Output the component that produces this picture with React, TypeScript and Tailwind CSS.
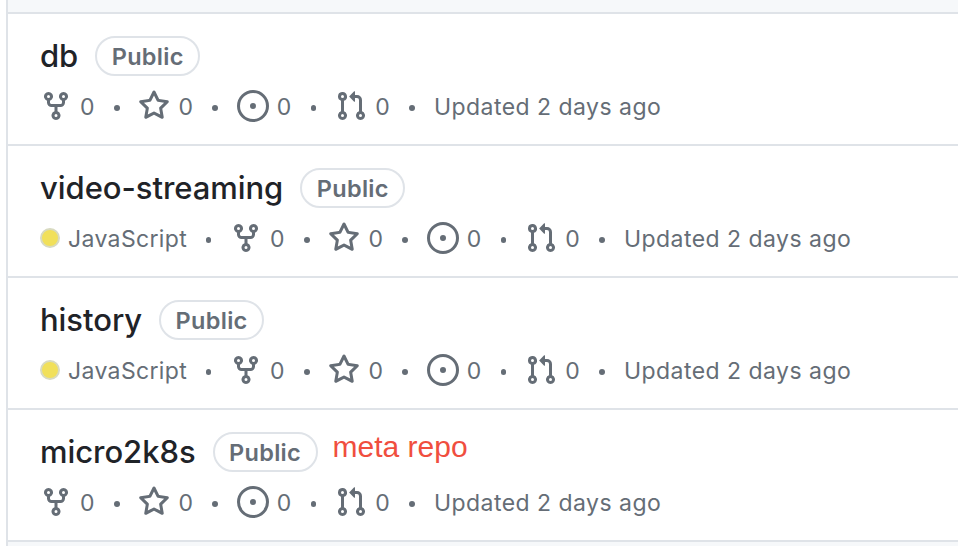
import React from 'react';

interface Repo {
    name: string;
    language?: string;
    note?: string;
}

const repos: Repo[] = [
    { name: 'db' },
    { name: 'video-streaming', language: 'JavaScript' },
    { name: 'history', language: 'JavaScript' },
    { name: 'micro2k8s', note: 'meta repo' },
];

const stats = [
    {
        id: 'forks',
        path: 'M5 5.372v.878c0 .414.336.75.75.75h4.5a.75.75 0 0 0 .75-.75v-.878a2.25 2.25 0 1 1 1.5 0v.878a2.25 2.25 0 0 1-2.25 2.25h-1.5v2.128a2.251 2.251 0 1 1-1.5 0V8.5h-1.5A2.25 2.25 0 0 1 3.5 6.25v-.878a2.25 2.25 0 1 1 1.5 0ZM5 3.25a.75.75 0 1 0-1.5 0 .75.75 0 0 0 1.5 0Zm6.75.75a.75.75 0 1 0 0-1.5.75.75 0 0 0 0 1.5Zm-3 8.75a.75.75 0 1 0-1.5 0 .75.75 0 0 0 1.5 0Z',
    },
    {
        id: 'stars',
        path: 'M8 .25a.75.75 0 0 1 .673.418l1.882 3.815 4.21.612a.75.75 0 0 1 .416 1.279l-3.046 2.97.719 4.192a.751.751 0 0 1-1.088.791L8 12.347l-3.766 1.98a.75.75 0 0 1-1.088-.79l.72-4.194L.818 6.374a.75.75 0 0 1 .416-1.28l4.21-.611L7.327.668A.75.75 0 0 1 8 .25Zm0 2.445L6.615 5.5a.75.75 0 0 1-.564.41l-3.097.45 2.24 2.184a.75.75 0 0 1 .216.664l-.528 3.084 2.769-1.456a.75.75 0 0 1 .698 0l2.77 1.456-.53-3.084a.75.75 0 0 1 .216-.664l2.24-2.183-3.096-.45a.75.75 0 0 1-.564-.41L8 2.694Z',
    },
    {
        id: 'issues',
        path: 'M8 9.5a1.5 1.5 0 1 0 0-3 1.5 1.5 0 0 0 0 3ZM8 0a8 8 0 1 1 0 16A8 8 0 0 1 8 0ZM1.5 8a6.5 6.5 0 1 0 13 0 6.5 6.5 0 0 0-13 0Z',
    },
    {
        id: 'pulls',
        path: 'M1.5 3.25a2.25 2.25 0 1 1 3 2.122v5.256a2.251 2.251 0 1 1-1.5 0V5.372A2.25 2.25 0 0 1 1.5 3.25Zm5.677-.177L9.573.677A.25.25 0 0 1 10 .854V2.5h1A2.5 2.5 0 0 1 13.5 5v5.628a2.251 2.251 0 1 1-1.5 0V5a1 1 0 0 0-1-1h-1v1.646a.25.25 0 0 1-.427.177L7.177 3.427a.25.25 0 0 1 0-.354ZM3.75 2.5a.75.75 0 1 0 0 1.5.75.75 0 0 0 0-1.5Zm0 9.5a.75.75 0 1 0 0 1.5.75.75 0 0 0 0-1.5Zm8.25.75a.75.75 0 1 0 1.5 0 .75.75 0 0 0-1.5 0Z',
    },
];

const Dot = () => <span className="mt-1 h-[5.5px] w-[5.5px] shrink-0 rounded-full bg-[#656d76]" />;

const RepoRow: React.FC<{ repo: Repo }> = ({ repo }) => (
    <li className="h-[132px] border-b-2 border-[#dfe3e8] bg-white pt-[22px] pl-8">
        <div className="flex h-10 items-center">
            <h3 className="text-[31px] leading-10 font-medium tracking-[-0.05px] text-[#1f2328]">{repo.name}</h3>
            <span className="ml-[17px] flex h-10 w-[105px] items-center justify-center rounded-full border-2 border-[#dfe3e8] pt-0.5 text-[23.5px] font-semibold tracking-[0.3px] text-[#656d76]">
                Public
            </span>
            {repo.note && (
                <span className="mb-2.5 ml-[15px] font-['Liberation_Sans'] text-[30px] leading-8 text-[#f04e3e]">
                    {repo.note}
                </span>
            )}
        </div>

        <div className="mt-[14px] flex h-8 items-center text-[23px] tracking-[0.46px] text-[#656d76]">
            {repo.language && (
                <div className="flex w-[190px] items-center">
                    <span className="h-5 w-5 rounded-full border-2 border-[#d8dac0] bg-[#f1e05a]" />
                    <span className="mt-0.5 ml-2 w-[137.5px] tracking-[0.36px]">{repo.language}</span>
                    <Dot />
                </div>
            )}
            {stats.map((stat) => (
                <div key={stat.id} className="flex w-[98.4px] items-center">
                    <svg viewBox="0 0 16 16" className="h-8 w-8" fill="currentColor">
                        <path d={stat.path} />
                    </svg>
                    <span className="mt-0.5 ml-2 w-[34px]">0</span>
                    <Dot />
                </div>
            ))}
            <span className="mt-0.5 ml-[0.4px]">Updated 2 days ago</span>
        </div>
    </li>
);

export default function App() {
    return (
        <div className="h-[546px] w-full overflow-hidden bg-white pl-1.5 font-['Inter',sans-serif]">
            <div className="h-full border-l-2 border-[#dfe3e8] bg-[#f6f8fa]">
                <div className="h-3.5 border-b-2 border-[#dfe3e8]" />
                <ul>
                    {repos.map((repo) => (
                        <RepoRow key={repo.name} repo={repo} />
                    ))}
                </ul>
            </div>
        </div>
    );
}
